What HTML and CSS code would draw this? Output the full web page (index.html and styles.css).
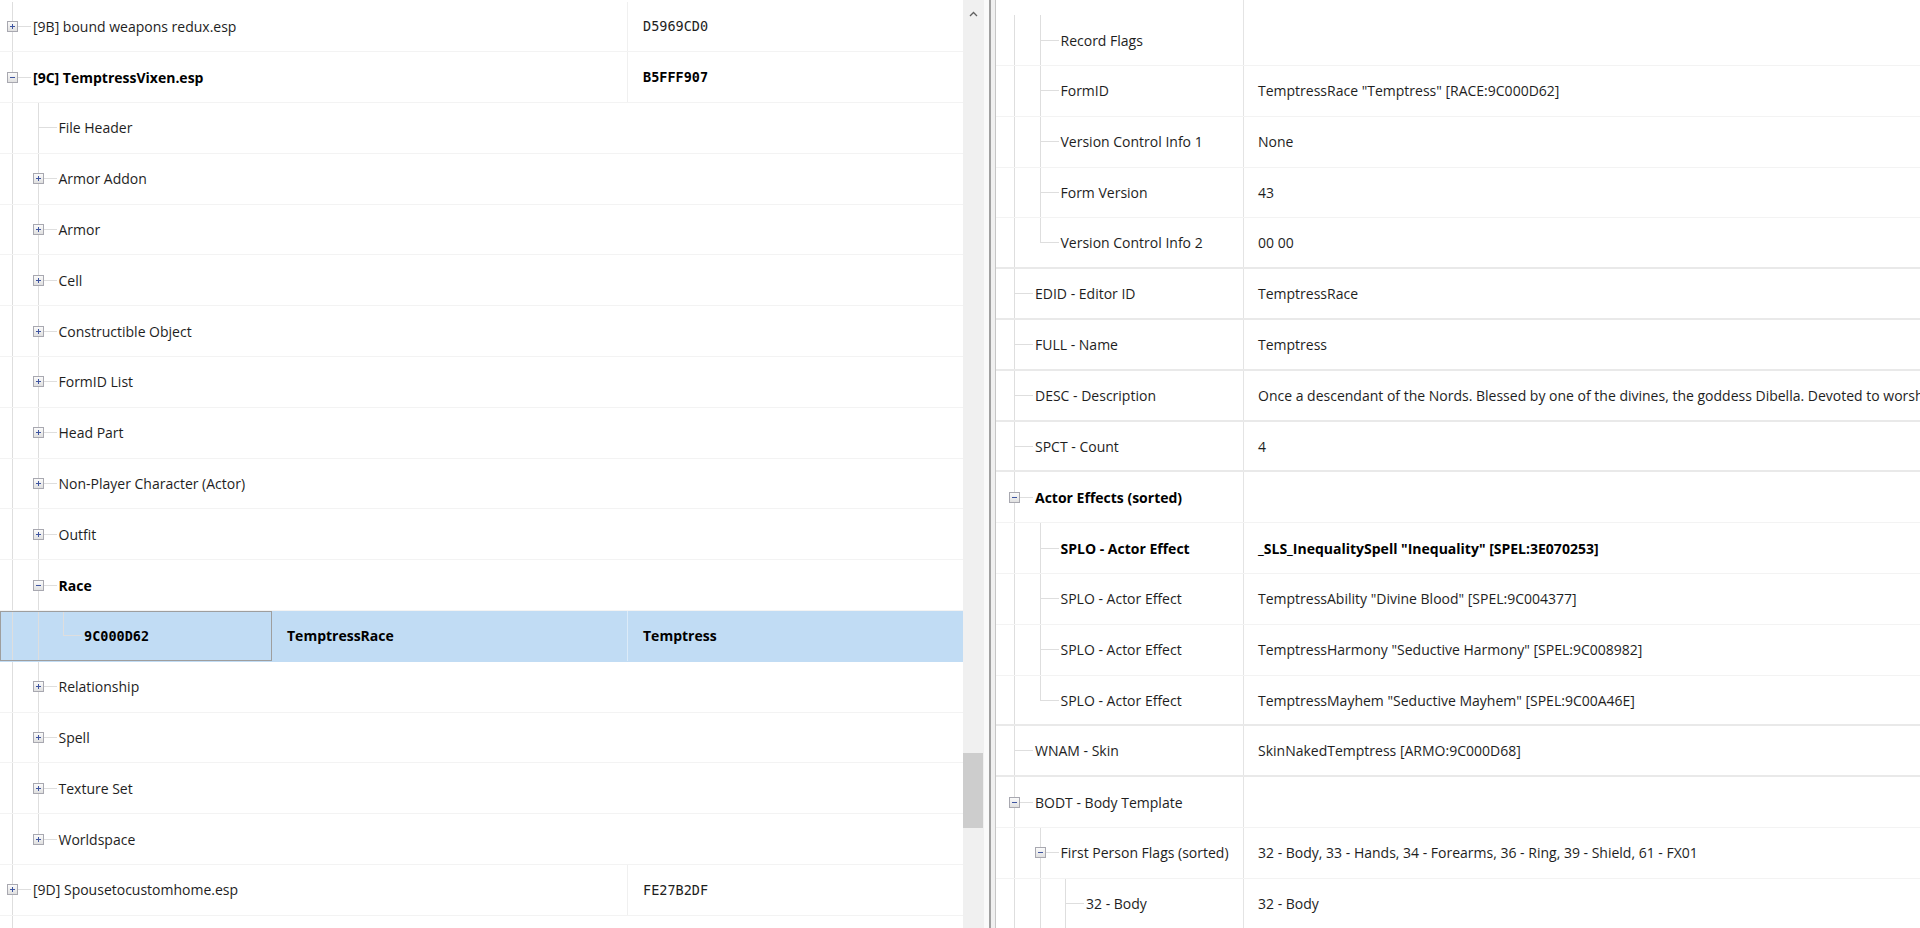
FILE: index.html
```html
<!DOCTYPE html>
<html lang="en">
<head>
  <meta charset="UTF-8">
  <link rel="stylesheet" href="styles.css">
  <title>Record view</title>
</head>
<body>
<div class="app">

  <!-- left: file / group / record tree -->
  <div class="left">
    <div class="tree">
      <div class="row">
        <div class="c1"><span class="node"><i class="exp plus"></i></span><span class="label">[9B] bound weapons redux.esp</span></div>
        <div class="c2"></div>
        <div class="c3 hash">D5969CD0</div>
      </div>
      <div class="row bold">
        <div class="c1"><span class="node"><i class="exp minus"></i></span><span class="label">[9C] TemptressVixen.esp</span></div>
        <div class="c2"></div>
        <div class="c3 hash">B5FFF907</div>
      </div>
      <div class="row"><div class="c1"><span class="ind"></span><span class="node"></span><span class="label">File Header</span></div></div>
      <div class="row"><div class="c1"><span class="ind"></span><span class="node"><i class="exp plus"></i></span><span class="label">Armor Addon</span></div></div>
      <div class="row"><div class="c1"><span class="ind"></span><span class="node"><i class="exp plus"></i></span><span class="label">Armor</span></div></div>
      <div class="row"><div class="c1"><span class="ind"></span><span class="node"><i class="exp plus"></i></span><span class="label">Cell</span></div></div>
      <div class="row"><div class="c1"><span class="ind"></span><span class="node"><i class="exp plus"></i></span><span class="label">Constructible Object</span></div></div>
      <div class="row"><div class="c1"><span class="ind"></span><span class="node"><i class="exp plus"></i></span><span class="label">FormID List</span></div></div>
      <div class="row"><div class="c1"><span class="ind"></span><span class="node"><i class="exp plus"></i></span><span class="label">Head Part</span></div></div>
      <div class="row"><div class="c1"><span class="ind"></span><span class="node"><i class="exp plus"></i></span><span class="label">Non-Player Character (Actor)</span></div></div>
      <div class="row"><div class="c1"><span class="ind"></span><span class="node"><i class="exp plus"></i></span><span class="label">Outfit</span></div></div>
      <div class="row bold"><div class="c1"><span class="ind"></span><span class="node"><i class="exp minus"></i></span><span class="label">Race</span></div></div>
      <div class="row bold sel">
        <div class="c1"><span class="ind"></span><span class="ind"></span><span class="node last"></span><span class="label hash">9C000D62</span></div>
        <div class="c2">TemptressRace</div>
        <div class="c3">Temptress</div>
      </div>
      <div class="row"><div class="c1"><span class="ind"></span><span class="node"><i class="exp plus"></i></span><span class="label">Relationship</span></div></div>
      <div class="row"><div class="c1"><span class="ind"></span><span class="node"><i class="exp plus"></i></span><span class="label">Spell</span></div></div>
      <div class="row"><div class="c1"><span class="ind"></span><span class="node"><i class="exp plus"></i></span><span class="label">Texture Set</span></div></div>
      <div class="row"><div class="c1"><span class="ind"></span><span class="node last"><i class="exp plus"></i></span><span class="label">Worldspace</span></div></div>
      <div class="row">
        <div class="c1"><span class="node"><i class="exp plus"></i></span><span class="label">[9D] Spousetocustomhome.esp</span></div>
        <div class="c2"></div>
        <div class="c3 hash">FE27B2DF</div>
      </div>
      <div class="tail"></div>
    </div>

    <div class="vscroll">
      <span class="arrow">
        <svg width="9" height="6" viewBox="0 0 9 6"><path d="M1 5 L4.5 1.5 L8 5" fill="none" stroke="#606060" stroke-width="1.3"/></svg>
      </span>
      <div class="thumb"></div>
    </div>
  </div>

  <div class="splitter"></div>

  <!-- right: record fields -->
  <div class="right">
    <div class="row"><div class="c1"><span class="ind"></span><span class="node"></span><span class="label">Record Flags</span></div><div class="c2"></div></div>
    <div class="row"><div class="c1"><span class="ind"></span><span class="node"></span><span class="label">FormID</span></div><div class="c2">TemptressRace "Temptress" [RACE:9C000D62]</div></div>
    <div class="row"><div class="c1"><span class="ind"></span><span class="node"></span><span class="label">Version Control Info 1</span></div><div class="c2">None</div></div>
    <div class="row"><div class="c1"><span class="ind"></span><span class="node"></span><span class="label">Form Version</span></div><div class="c2">43</div></div>
    <div class="row end"><div class="c1"><span class="ind"></span><span class="node last"></span><span class="label">Version Control Info 2</span></div><div class="c2">00 00</div></div>
    <div class="row end"><div class="c1"><span class="node"></span><span class="label">EDID - Editor ID</span></div><div class="c2">TemptressRace</div></div>
    <div class="row end"><div class="c1"><span class="node"></span><span class="label">FULL - Name</span></div><div class="c2">Temptress</div></div>
    <div class="row end"><div class="c1"><span class="node"></span><span class="label">DESC - Description</span></div><div class="c2">Once a descendant of the Nords. Blessed by one of the divines, the goddess Dibella. Devoted to worship and to the beauty of the goddess.</div></div>
    <div class="row end"><div class="c1"><span class="node"></span><span class="label">SPCT - Count</span></div><div class="c2">4</div></div>
    <div class="row bold"><div class="c1"><span class="node"><i class="exp minus"></i></span><span class="label">Actor Effects (sorted)</span></div><div class="c2"></div></div>
    <div class="row bold"><div class="c1"><span class="ind"></span><span class="node"></span><span class="label">SPLO - Actor Effect</span></div><div class="c2">_SLS_InequalitySpell "Inequality" [SPEL:3E070253]</div></div>
    <div class="row"><div class="c1"><span class="ind"></span><span class="node"></span><span class="label">SPLO - Actor Effect</span></div><div class="c2">TemptressAbility "Divine Blood" [SPEL:9C004377]</div></div>
    <div class="row"><div class="c1"><span class="ind"></span><span class="node"></span><span class="label">SPLO - Actor Effect</span></div><div class="c2">TemptressHarmony "Seductive Harmony" [SPEL:9C008982]</div></div>
    <div class="row end"><div class="c1"><span class="ind"></span><span class="node last"></span><span class="label">SPLO - Actor Effect</span></div><div class="c2">TemptressMayhem "Seductive Mayhem" [SPEL:9C00A46E]</div></div>
    <div class="row end"><div class="c1"><span class="node"></span><span class="label">WNAM - Skin</span></div><div class="c2">SkinNakedTemptress [ARMO:9C000D68]</div></div>
    <div class="row"><div class="c1"><span class="node"><i class="exp minus"></i></span><span class="label">BODT - Body Template</span></div><div class="c2"></div></div>
    <div class="row"><div class="c1"><span class="ind"></span><span class="node"><i class="exp minus"></i></span><span class="label">First Person Flags (sorted)</span></div><div class="c2">32 - Body, 33 - Hands, 34 - Forearms, 36 - Ring, 39 - Shield, 61 - FX01</div></div>
    <div class="row"><div class="c1"><span class="ind"></span><span class="ind"></span><span class="node"></span><span class="label">32 - Body</span></div><div class="c2">32 - Body</div></div>
  </div>

</div>
</body>
</html>
```

FILE: styles.css
```css
html, body {
    margin: 0;
    height: 100%;
}

body {
    overflow: hidden;
    background: #fff;
    font-family: "Open Sans", "Noto Sans", sans-serif;
    font-size: 14px;
    color: #1e1e1e;
}

.app {
    display: flex;
    height: 928px;
}

/* ---- rows ---- */
.row {
    display: flex;
    height: 50.8px;
    box-sizing: border-box;
    border-bottom: 1px solid #f3f3f3;
    white-space: nowrap;
}

.row.bold {
    font-weight: 700;
    color: #000;
}

.c1 {
    flex: none;
    display: flex;
    box-sizing: border-box;
}

.c2, .c3 {
    display: flex;
    align-items: center;
    box-sizing: border-box;
    overflow: hidden;
}

.label {
    display: flex;
    align-items: center;
    padding-left: 2px;
}

.hash {
    font-family: "DejaVu Sans Mono", "Liberation Mono", monospace;
    font-size: 13.5px;
}

/* ---- tree lines and expanders ---- */
.ind {
    flex: none;
    width: 25.5px;
    background: linear-gradient(#dedede, #dedede) 12px 0 / 1px 100% no-repeat;
}

.node {
    flex: none;
    width: 31px;
    box-sizing: border-box;
    padding-left: 7px;
    display: flex;
    align-items: center;
    background:
        linear-gradient(#dedede, #dedede) 12px 50% / 19px 1px no-repeat,
        linear-gradient(#dedede, #dedede) 12px 0 / 1px 100% no-repeat;
}

.node.last {
    background:
        linear-gradient(#dedede, #dedede) 12px 50% / 19px 1px no-repeat,
        linear-gradient(#dedede, #dedede) 12px 0 / 1px 50% no-repeat;
}

.exp {
    display: block;
    width: 11px;
    height: 11px;
    box-sizing: border-box;
    border: 1px solid #a8a8b0;
}

.exp.plus {
    background:
        linear-gradient(#3f55a0, #3f55a0) center / 5px 1px no-repeat,
        linear-gradient(#3f55a0, #3f55a0) center / 1px 5px no-repeat,
        linear-gradient(#fbfbfb, #e0e0e0);
}

.exp.minus {
    background:
        linear-gradient(#3f55a0, #3f55a0) center / 5px 1px no-repeat,
        linear-gradient(#fbfbfb, #e0e0e0);
}

/* ---- left pane ---- */
.left {
    flex: none;
    display: flex;
    width: 984px;
}

.tree {
    flex: 1;
    padding-top: 1.5px;
    overflow: hidden;
}

.tree .c1 { width: 272px; }
.tree .c2 { width: 355px; flex: none; padding-left: 15px; }
.tree .c3 { flex: 1; padding-left: 15px; border-left: 1px solid #f0f0f0; }

.tree .sel {
    background: #c1dcf4;
    border-bottom-color: #c1dcf4;
}

.tree .sel .c1 {
    outline: 1px solid #9e9e9e;
    outline-offset: -1px;
}

.tree .sel .c3 {
    border-left-color: #dcebf8;
}

.tail {
    height: 30px;
    background: linear-gradient(#dedede, #dedede) 12px 0 / 1px 100% no-repeat;
}

.vscroll {
    flex: none;
    width: 21px;
    background: #f0f0f0;
    display: flex;
    flex-direction: column;
}

.arrow {
    height: 27px;
    display: flex;
    align-items: center;
    justify-content: center;
}

.thumb {
    width: 20px;
    height: 75px;
    margin-top: 726px;
    background: #cdcdcd;
}

.splitter {
    flex: none;
    width: 12px;
    background: linear-gradient(to right, #fafafa 0 5px, #a0a0a0 5px 7px, #f0f0f0 7px 11px, #c6c6c6 11px 12px);
}

/* ---- right pane ---- */
.right {
    flex: 1;
    min-width: 0;
    padding-top: 15.3px;
    box-sizing: border-box;
    overflow: hidden;
    background: linear-gradient(#e4e4e4, #e4e4e4) 247px 0 / 1px 100% no-repeat;
}

.right .c1 { width: 247px; padding-left: 6px; }
.right .c2 { flex: 1; padding-left: 15px; }

.right .row.end {
    border-bottom: 2px solid #e9e9e9;
}
```
